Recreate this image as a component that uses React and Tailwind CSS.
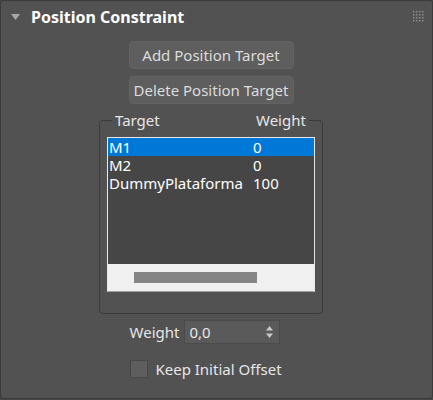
import React from "react";

const font = { fontFamily: '"Noto Sans", "Open Sans", sans-serif' };

function Grip() {
  const dots = [];
  for (let r = 0; r < 4; r++)
    for (let c = 0; c < 4; c++)
      dots.push(<rect key={r + "-" + c} x={c * 3} y={r * 3} width="1.5" height="1.5" fill="#8a8a8a" />);
  return (
    <svg width="11" height="11" viewBox="0 0 11 11" className="absolute left-[412px] top-[10px]">
      {dots}
    </svg>
  );
}

export default function App() {
  const rows = [
    ["M1", "0", true],
    ["M2", "0", false],
    ["DummyPlataforma", "100", false],
  ];
  return (
    <div className="w-[433px] h-[400px] bg-[#474747]" style={font}>
      <div className="relative w-[433px] h-[399px] bg-[#525252] border border-[#3a3a3a] rounded-[3px] flex flex-col">
        <div className="h-[35px] flex items-center pl-[10px]">
          <svg width="10" height="8" viewBox="0 0 10 8" className="mt-[-4px]">
            <polygon points="0,1 9,1 4.5,7" fill="#a8a8a8" />
          </svg>
          <span className="ml-[10px] mb-[4px] text-[16px] font-bold text-white leading-none">Position Constraint</span>
        </div>
        <Grip />
        <div className="ml-[98px] w-[224px] flex flex-col items-center">
          <button className="mt-[5px] w-[165px] h-[28px] rounded-[4px] bg-[#5e5e5e] border border-[#636363] text-[#dcdcdc] text-[15px] leading-none flex items-center justify-center">
            Add Position Target
          </button>
          <button className="mt-[7px] w-[165px] h-[28px] rounded-[4px] bg-[#5e5e5e] border border-[#636363] text-[#dcdcdc] text-[15px] leading-none flex items-center justify-center">
            Delete Position Target
          </button>
          <fieldset className="mt-[6px] w-[224px] border border-[#3a3a3a] rounded-[4px] pl-[7px] pr-[6px] pb-[21px] pt-[7px]">
            <legend className="ml-[5px] px-[3px] flex text-[15px] text-[#e6e6e6] leading-[20px]">
              <span className="w-[141px]">Target</span>
              <span>Weight</span>
            </legend>
            <div className="w-[208px] h-[155px] border border-[#e8e8e8] border-b-[#a0a0a0] flex flex-col">
              <div className="flex-1 bg-[#464646] flex flex-col">
                {rows.map(([n, w, sel]) => (
                  <div
                    key={n}
                    className={
                      "h-[18px] flex items-center text-[15px] text-white leading-[18px] pl-[1px] " +
                      (sel ? "bg-[#0078d7]" : "")
                    }
                  >
                    <span className="w-[144px] whitespace-nowrap">{n}</span>
                    <span>{w}</span>
                  </div>
                ))}
              </div>
              <div className="h-[27px] bg-[#f0f0f0] flex items-center pl-[26px]">
                <div className="w-[123px] h-[11px] bg-[#858585]" />
              </div>
            </div>
          </fieldset>
          <div className="mt-[6px] flex items-center ml-[-12px]">
            <span className="text-[15px] text-[#e6e6e6] leading-none mr-[5px]">Weight</span>
            <div className="w-[96px] h-[24px] bg-[#5a5a5a] border border-[#4a4a4a] flex items-center pl-[4px] pr-[6px]">
              <span className="flex-1 text-[15px] text-[#e6e6e6] leading-none">0,0</span>
              <svg width="7" height="14" viewBox="0 0 7 14">
                <polygon points="3.5,1 7,5.5 0,5.5" fill="#c8c8c8" />
                <polygon points="0,8.5 7,8.5 3.5,13" fill="#c8c8c8" />
              </svg>
            </div>
          </div>
          <div className="mt-[16px] flex items-center ml-[-10px]">
            <div className="w-[18px] h-[18px] bg-[#5e5e5e] border border-[#474747]" />
            <span className="ml-[7px] text-[15px] text-[#e6e6e6] leading-none">Keep Initial Offset</span>
          </div>
        </div>
      </div>
    </div>
  );
}
